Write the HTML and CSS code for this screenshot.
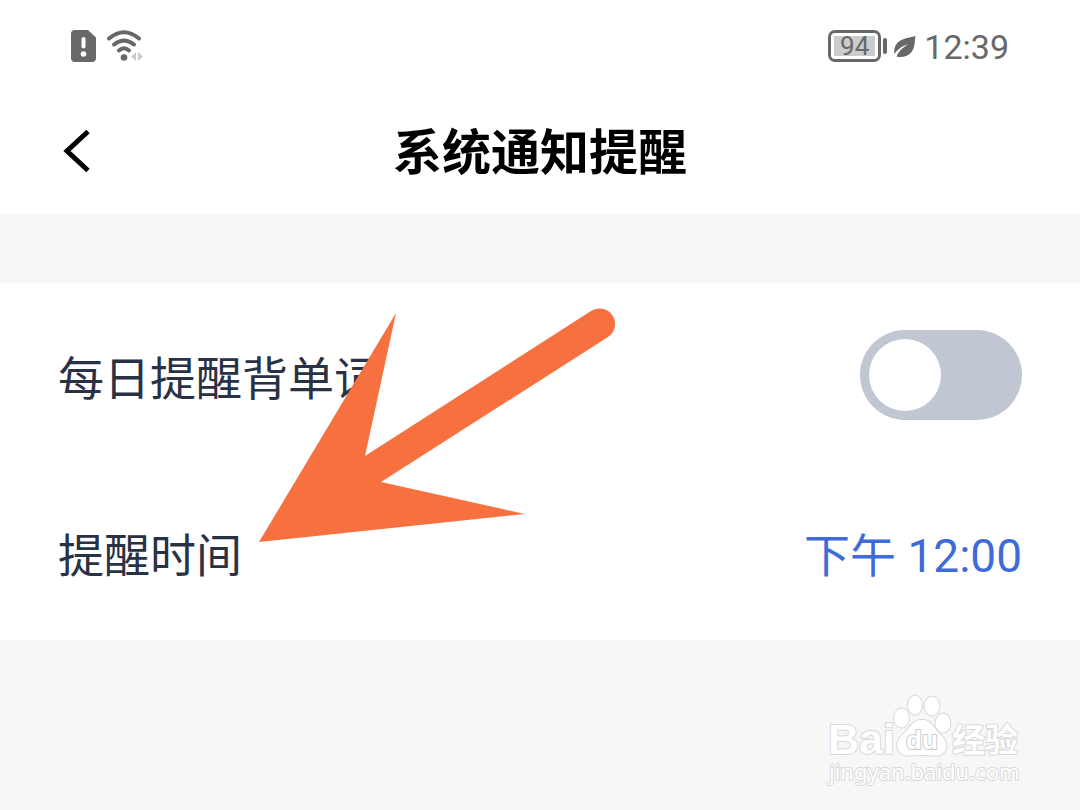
FILE: index.html
```html
<!DOCTYPE html>
<html lang="zh-CN">
<head>
  <meta charset="utf-8">
  <meta name="viewport" content="width=device-width, initial-scale=1">
  <title>系统通知提醒</title>
  <link rel="stylesheet" href="styles.css">
</head>
<body>
  <div class="status-bar">
    <div class="status-left">
      <svg width="26" height="32" viewBox="0 0 26 32" aria-hidden="true">
        <path fill="#686868" d="M4 0h13l8 7.500V28a4 4 0 0 1-4 4H4a4 4 0 0 1-4-4V4a4 4 0 0 1 4-4z"/>
        <path stroke="#fff" stroke-width="4" stroke-linecap="round" d="M12.500 9v7.500"/>
        <circle cx="12.500" cy="24" r="2.800" fill="#fff"/>
      </svg>
      <svg width="40" height="34" viewBox="0 0 40 34" aria-hidden="true">
        <g fill="none" stroke="#686868" stroke-width="4" stroke-linecap="round">
          <path d="M3 9.500Q18 -3 33 9.500"/>
          <path d="M8 15.500Q18 7.500 28 15.500"/>
          <path d="M13 21.500Q18 17 23 21.500"/>
        </g>
        <circle cx="18" cy="28.500" r="3.300" fill="#686868"/>
        <path fill="#ccc" d="M30 23v9l-5-4.500zM32 23v9l5-4.500z"/>
      </svg>
    </div>
    <div class="status-right">
      <span class="battery"><span class="battery-level">94</span></span>
      <span class="battery-tip"></span>
      <svg class="leaf" width="23" height="24" viewBox="0 0 23 24" aria-hidden="true">
        <path fill="#686868" d="M22.500 2C14 4 7 5 3.500 10C1 13.500 1 18 1.500 20C5 14.500 9.500 12 15 10.500C9 14 5.500 17.500 3.500 22.500C9 24 15 22.500 18.500 18C22.500 12.500 21.500 7 22.500 2z"/>
      </svg>
      <span class="clock">12:39</span>
    </div>
  </div>

  <header class="header">
    <a class="back" href="#" aria-label="返回">
      <svg width="30" height="46" viewBox="0 0 30 46" aria-hidden="true">
        <path fill="none" stroke="#000" stroke-width="5" d="M28 3.500L7 23L28 42.500"/>
      </svg>
    </a>
    <h1 class="title">系统通知提醒</h1>
  </header>

  <main class="list">
    <div class="row">
      <label class="label" for="daily">每日提醒背单词</label>
      <input class="switch" type="checkbox" id="daily">
    </div>
    <div class="row">
      <label class="label" for="time">提醒时间</label>
      <button class="time" type="button" id="time">下午 12:00</button>
    </div>
    <svg class="arrow" width="356" height="234" viewBox="0 0 356 234" aria-hidden="true">
      <path fill="#f67040" d="M0 234L137 5L106 148L332 3A15.500 15.500 0 0 1 349 29L122 174L266 206z"/>
    </svg>
  </main>

  <svg class="watermark" width="210" height="100" viewBox="0 0 210 100" role="img" aria-label="Baidu 经验">
    <g class="mark">
      <text class="mark-brand" x="4" y="64">Bai</text>
      <ellipse cx="77.500" cy="28" rx="7.500" ry="9.500"/>
      <ellipse cx="91" cy="15" rx="7" ry="9.500"/>
      <ellipse cx="108" cy="16" rx="7.500" ry="9.500"/>
      <ellipse cx="119" cy="33" rx="7.500" ry="9.500"/>
      <path d="M98 30C89 29 86 38 79 44C73 49 72 57 75 61C79 68 88 65 98 65C108 65 117 68 121 61C124 57 122 49 116 44C109 38 107 29 98 30z"/>
      <text class="mark-du" x="82" y="59">du</text>
      <text class="mark-cn" x="128" y="62">经验</text>
      <text class="mark-url" x="5" y="90">jingyan.baidu.com</text>
    </g>
  </svg>
</body>
</html>
```
FILE: styles.css
```css
* {
  box-sizing: border-box;
}

body {
  position: relative;
  min-height: 100vh;
  margin: 0;
  background-color: #f7f7f7;
  color: #293245;
  font-family: Roboto, "Noto Sans CJK SC", sans-serif;
}

.status-bar {
  display: flex;
  justify-content: space-between;
  align-items: center;
  padding: 26px 71px 28px;
  background-color: #fff;
  color: #686868;
}

.status-left,
.status-right {
  display: flex;
  align-items: center;
}

.status-left {
  gap: 9px;
}

.battery {
  padding: 3px;
  border: 3px solid #686868;
  border-radius: 7px;
}

.battery-level {
  display: block;
  padding: 0 6px;
  background-color: #ccc;
  font-size: 26px;
  line-height: 20px;
}

.battery-tip {
  width: 4px;
  height: 16px;
  margin-left: 2px;
  border-radius: 2px;
  background-color: #686868;
}

.leaf {
  margin: 0 8px 0 6px;
}

.clock {
  font-size: 34px;
  line-height: 42px;
  margin-bottom: -2px;
}

.header {
  display: grid;
  grid-template-columns: 1fr auto 1fr;
  align-items: start;
  padding: 24px 60px;
  background-color: #fff;
}

.back {
  display: flex;
  padding-top: 10px;
}

.title {
  margin: 0;
  color: #000;
  font-size: 49px;
  font-weight: 700;
  line-height: 72px;
}

.list {
  position: relative;
  margin-top: 69px;
  padding-top: 3px;
  background-color: #fff;
}

.row {
  display: flex;
  justify-content: space-between;
  align-items: flex-start;
  padding: 44px 58px 35px;
}

.label,
.time {
  font-size: 46px;
  line-height: 98px;
}

.time {
  padding: 0;
  border: none;
  background: none;
  color: #3f6bd8;
  font-family: inherit;
  cursor: pointer;
}

.switch {
  appearance: none;
  display: flex;
  width: 162px;
  height: 90px;
  margin: 0;
  padding: 9px;
  border-radius: 45px;
  background-color: #c0c7d3;
  cursor: pointer;
}

.switch::before {
  content: "";
  width: 72px;
  height: 72px;
  border-radius: 50%;
  background-color: #fff;
}

.switch:checked {
  justify-content: flex-end;
  background-color: #3f6bd8;
}

.arrow {
  position: absolute;
  top: 25px;
  left: 259px;
  pointer-events: none;
}

.watermark {
  position: absolute;
  right: 46px;
  bottom: 20px;
}

.mark {
  fill: #fff;
  stroke: #d8d8d8;
  stroke-width: 2px;
  stroke-linejoin: round;
  paint-order: stroke;
}

.mark-brand {
  font-family: "Liberation Sans", sans-serif;
  font-size: 43px;
  font-weight: 700;
}

.mark-du {
  stroke: #ccc;
  font-family: "Liberation Sans", sans-serif;
  font-size: 26px;
  font-weight: 700;
}

.mark-cn {
  font-family: "Noto Sans CJK SC", sans-serif;
  font-size: 33px;
  font-weight: 700;
}

.mark-url {
  font-family: "Noto Sans", sans-serif;
  font-size: 22px;
}
```
